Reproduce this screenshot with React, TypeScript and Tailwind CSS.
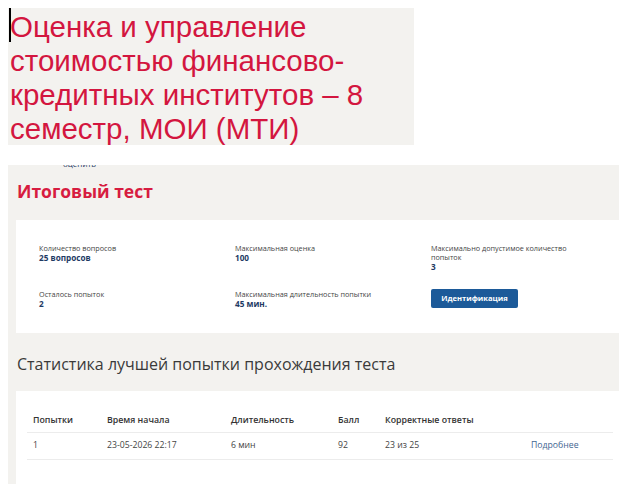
const stats = [
  { label: "Количество вопросов", value: "25 вопросов" },
  { label: "Максимальная оценка", value: "100" },
  { label: "Максимально допустимое количество попыток", value: "3" },
];

const cols = "grid grid-cols-[80px_124px_107px_47px_146px_1fr]";

const App = () => {
  return (
    <div className="w-[619px] h-[484px] overflow-hidden bg-white relative">
      {/* course title block */}
      <div className="ml-2 mt-2 w-[406px] h-[137px] bg-[#f3f2ef] relative pl-[2px] pt-[2px]">
        <span className="absolute left-[1px] top-0 w-[2px] h-[34px] bg-black"></span>
        <h1 className="font-['Liberation_Sans',Arial,sans-serif] text-[29.5px] leading-[34px] text-[#d3163f] whitespace-nowrap">
          Оценка и управление
          <br />
          стоимостью финансово-
          <br />
          кредитных институтов – 8
          <br />
          семестр, МОИ (МТИ)
        </h1>
      </div>

      {/* test page */}
      <div className="absolute left-2 top-[165px] right-0 bottom-0 bg-[#f3f2ef] font-['Open_Sans',sans-serif]">
        <div className="h-[5px] overflow-hidden pl-[55px]">
          <div className="-mt-[6px] text-[8px] leading-[10px] text-[#1e3a64]">оценить</div>
        </div>
        <h2 className="mt-[9px] pl-[9px] text-[17.5px] leading-[24px] font-bold text-[#d71c40]">Итоговый тест</h2>

        <div className="mt-[17px] ml-2 h-[113px] bg-white pt-[24px] pl-[23px]">
          <div className="grid grid-cols-[196px_196px_196px] h-[45px]">
            {stats.map((s) => (
              <div key={s.label}>
                <div className="text-[7.25px] leading-[9px] text-[#444] w-[150px]">{s.label}</div>
                <div className="text-[8.2px] leading-[10px] font-bold text-[#1e3a64]">{s.value}</div>
              </div>
            ))}
          </div>
          <div className="grid grid-cols-[196px_196px_196px]">
            <div className="pt-[1px]">
              <div className="text-[7.25px] leading-[9px] text-[#444]">Осталось попыток</div>
              <div className="text-[8.2px] leading-[10px] font-bold text-[#1e3a64]">2</div>
            </div>
            <div className="pt-[1px]">
              <div className="text-[7.25px] leading-[9px] text-[#444]">Максимальная длительность попытки</div>
              <div className="text-[8.2px] leading-[10px] font-bold text-[#1e3a64]">45 мин.</div>
            </div>
            <div>
              <button className="block w-[87px] h-[19px] rounded-[2px] bg-[#1c5a99] text-white text-[7.6px] font-bold leading-[19px]">
                Идентификация
              </button>
            </div>
          </div>
        </div>

        <h2 className="mt-[20px] pl-[9px] text-[16px] leading-[22px] text-[#3a3a3a]">
          Статистика лучшей попытки прохождения теста
        </h2>

        <div className="mt-[16px] ml-2 h-[120px] bg-white pt-[19px] pl-[11px] pr-[6px]">
          <div className={`${cols} h-[23px] items-center border-b border-[#ececec] text-[8.8px] font-semibold text-[#333]`}>
            <div className="pl-[6px]">Попытки</div>
            <div>Время начала</div>
            <div>Длительность</div>
            <div>Балл</div>
            <div>Корректные ответы</div>
            <div></div>
          </div>
          <div className={`${cols} h-[27px] items-center border-b border-[#ececec] text-[8.7px] text-[#444]`}>
            <div className="pl-[6px]">1</div>
            <div>23-05-2026 22:17</div>
            <div>6 мин</div>
            <div>92</div>
            <div>23 из 25</div>
            <div className="text-[#3f6591]">Подробнее</div>
          </div>
        </div>
      </div>
    </div>
  );
};

export default App;
